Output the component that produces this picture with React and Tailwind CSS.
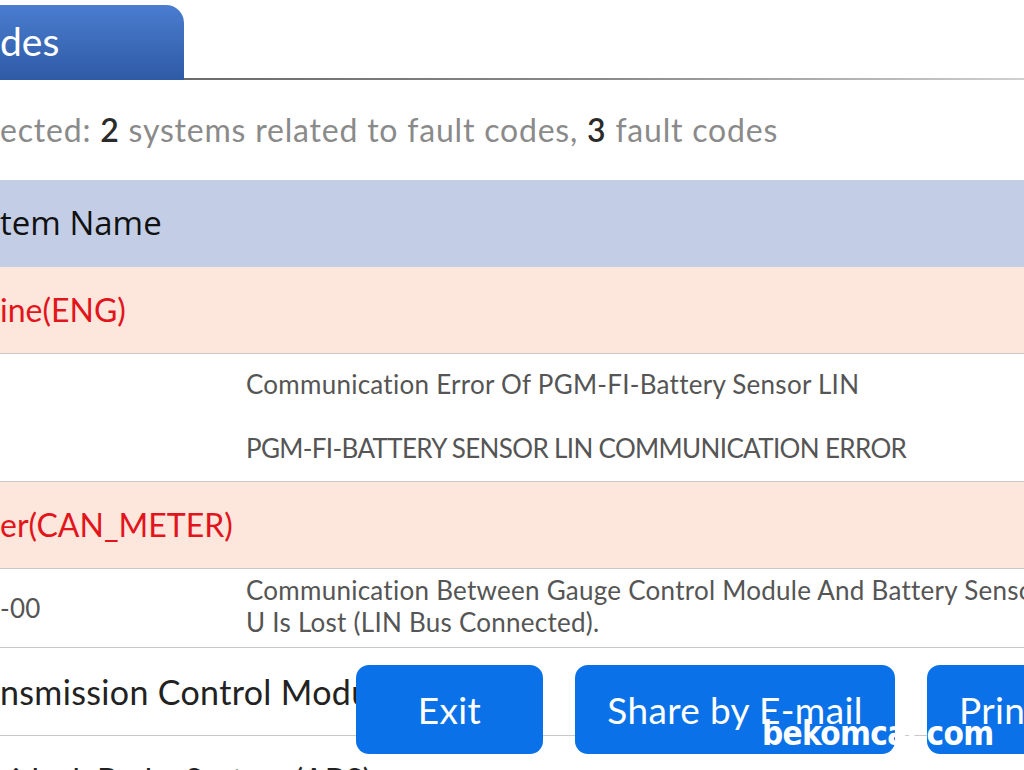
import React from 'react';

const faultRows = [
  {
    code: '',
    lines: [
      { text: 'Communication Error Of PGM-FI-Battery Sensor LIN', track: 'tracking-[0.01em]' },
      { text: 'PGM-FI-BATTERY SENSOR LIN COMMUNICATION ERROR', track: 'tracking-[-0.025em]' },
    ],
  },
];

const SystemRow = ({ name }) => (
  <div className="h-[87px] flex items-center bg-[#fde6db] border-b border-[#c9c9c9]">
    <span className="text-[32px] text-[#e2141c]">{name}</span>
  </div>
);

const App = () => {
  return (
    <div className="relative w-[1024px] h-[770px] overflow-hidden bg-white font-['Lato',sans-serif]">
      {/* tab strip */}
      <div className="flex items-end h-[80px] pt-[4px]">
        <div className="w-[184px] h-[75px] rounded-tr-[18px] bg-gradient-to-b from-[#4a7dcf] to-[#2f5aa6] flex items-center">
          <span className="text-white text-[39px] leading-none pb-[2px]">des</span>
        </div>
        <div className="flex-1 h-[2px] bg-gradient-to-r from-[#6b6b6b] via-[#8a8a8a] to-[#d0d0d0]" />
      </div>

      {/* summary */}
      <div className="h-[100px] flex items-center text-[32px] tracking-[0.025em] text-[#8a8a8a] whitespace-nowrap">
        <span>
          ected: <b className="text-[#2a2a2a] font-semibold">2</b> systems related to fault codes,{' '}
          <b className="text-[#2a2a2a] font-semibold">3</b> fault codes
        </span>
      </div>

      {/* table */}
      <div className="h-[87px] flex items-center bg-[#c3cee6] border-b border-[#c3cee6]">
        <span className="text-[33px] text-[#111] font-['Open_Sans',sans-serif]">tem Name</span>
      </div>

      <SystemRow name="ine(ENG)" />

      {faultRows.map((row, i) => (
        <div key={i} className="h-[128px] flex border-b border-[#c9c9c9]">
          <div className="w-[246px] shrink-0" />
          <div className="flex flex-col justify-center gap-[32px] pb-[4px] text-[26px] text-[#555] whitespace-nowrap">
            {row.lines.map((l) => (
              <span key={l.text} className={`leading-[32px] ${l.track}`}>{l.text}</span>
            ))}
          </div>
        </div>
      ))}

      <SystemRow name="er(CAN_METER)" />

      <div className="h-[79px] flex border-b border-[#c9c9c9] text-[26px] tracking-[0.01em] text-[#555]">
        <div className="w-[246px] shrink-0 flex items-center">
          <span>-00</span>
        </div>
        <div className="flex flex-col justify-center pb-[4px] leading-[32px] whitespace-nowrap">
          <span>Communication Between Gauge Control Module And Battery Sensor</span>
          <span>U Is Lost (LIN Bus Connected).</span>
        </div>
      </div>

      <div className="h-[88px] flex items-center border-b border-[#c9c9c9] whitespace-nowrap">
        <span className="text-[34px] tracking-[0.01em] text-[#222]">nsmission Control Module (TCM)</span>
      </div>

      <div className="h-[88px] flex items-center whitespace-nowrap">
        <span className="text-[32px] text-[#222]">ti-lock Brake System (ABS)</span>
      </div>

      {/* floating action buttons */}
      <div className="absolute left-[356px] top-[665px] flex gap-[32px]">
        <button className="w-[187px] h-[89px] rounded-[13px] bg-[#0a71e8] text-white text-[37px] tracking-[0.01em]">Exit</button>
        <button className="w-[320px] h-[89px] rounded-[13px] bg-[#0a71e8] text-white text-[37px] tracking-[0.01em]">Share by E-mail</button>
        <button className="w-[200px] h-[89px] rounded-[13px] bg-[#0a71e8] text-white text-[37px] tracking-[0.01em] text-left pl-[32px]">Print</button>
      </div>

      {/* watermark */}
      <div className="absolute left-[762px] top-[717px] text-white text-[33px] font-bold leading-none font-['DejaVu_Sans_Condensed','DejaVu_Sans',sans-serif] tracking-[-0.02em]">
        bekomcar.com
      </div>
    </div>
  );
};

export default App;
